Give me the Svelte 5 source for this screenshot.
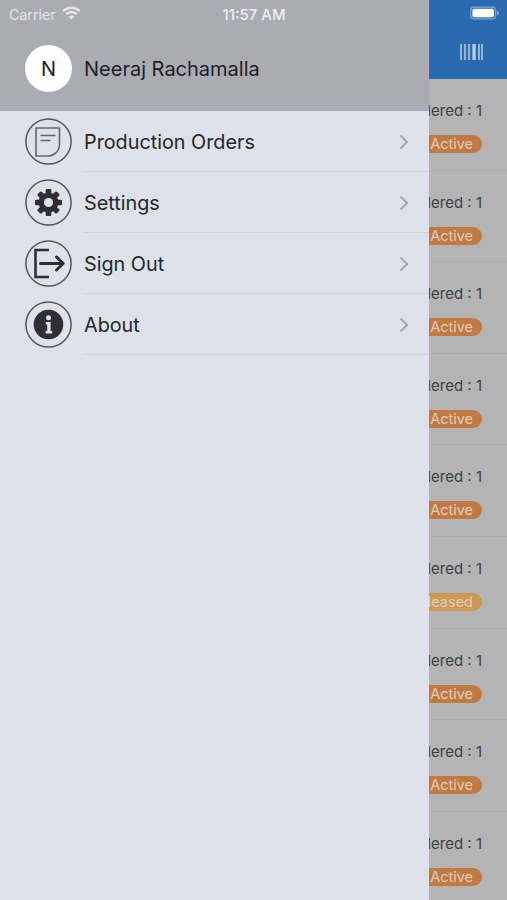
<script>
  const menu = [
    { label: 'Production Orders', icon: 'doc' },
    { label: 'Settings', icon: 'gear' },
    { label: 'Sign Out', icon: 'out' },
    { label: 'About', icon: 'info' }
  ];
  const statuses = ['Active','Active','Active','Active','Active','Released','Active','Active','Active'];
  const teeth = [0,45,90,135];
</script>

<div class="screen">
  <aside class="drawer">
    <header class="profile">
      <div class="status-left">
        <span>Carrier</span>
        <svg width="19" height="14" viewBox="0 0 19 14" aria-hidden="true">
          <path d="M1.2 5.2a11.6 11.6 0 0 1 16.6 0" fill="none" stroke="#e6e6ea" stroke-width="2.4"/>
          <path d="M4.2 8.2a7.4 7.4 0 0 1 10.6 0" fill="none" stroke="#e6e6ea" stroke-width="2.4"/>
          <path d="M6.8 10.7a3.6 3.6 0 0 1 5.4 0L9.5 13.6z" fill="#e6e6ea"/>
        </svg>
        <span class="time">11:57 AM</span>
      </div>
      <div class="user">
        <div class="avatar">N</div>
        <div class="name">Neeraj Rachamalla</div>
      </div>
    </header>
    <nav class="menu">
      {#each menu as item}
        <div class="item">
          <div class="ring">
            <svg width="47" height="47" viewBox="0 0 47 47" aria-hidden="true">
              <circle cx="23.5" cy="23.5" r="22.6" fill="none" stroke="#55555a" stroke-width="1.5"/>
              {#if item.icon === 'doc'}
                <path d="M11 10h23.5v16c0 7-5 12-12 12H11z" fill="none" stroke="#66666a" stroke-width="1.6" stroke-linejoin="round"/>
                <path d="M15.5 17.5h15M15.5 22.5h10" stroke="#66666a" stroke-width="1.6" fill="none"/>
              {:else if item.icon === 'gear'}
                <g fill="#2f2f33">
                  {#each teeth as a}
                    <rect x="20.7" y="10" width="5.6" height="27" rx="1.2" transform="rotate({a} 23.5 23.5)"/>
                  {/each}
                  <circle cx="23.5" cy="23.5" r="10"/>
                </g>
                <circle cx="23.5" cy="23.5" r="4.6" fill="#dde1ea"/>
              {:else if item.icon === 'out'}
                <path d="M24 10H10.5v27H24" fill="none" stroke="#2f2f33" stroke-width="2.6"/>
                <path d="M15.5 23.5H38M31.5 17l6.7 6.5-6.7 6.5" fill="none" stroke="#2f2f33" stroke-width="3" stroke-linecap="round" stroke-linejoin="round"/>
              {:else}
                <circle cx="23.5" cy="23.5" r="14.8" fill="#2f2f33"/>
                <circle cx="23.5" cy="16.8" r="2.5" fill="#dde1ea"/>
                <path d="M20.8 21h4.8v9h1.6v2.4h-6.6V30h1.6v-6.6h-1.4z" fill="#dde1ea"/>
              {/if}
            </svg>
          </div>
          <div class="row">
            <span>{item.label}</span>
            <svg class="chev" width="10" height="16" viewBox="0 0 10 16" aria-hidden="true">
              <path d="M1.5 1.5 8 8l-6.5 6.5" fill="none" stroke="#a4a7ae" stroke-width="2"/>
            </svg>
          </div>
        </div>
      {/each}
    </nav>
  </aside>

  <section class="behind">
    <div class="bar">
      <svg class="battery" width="30" height="14" viewBox="0 0 30 14" aria-hidden="true">
        <rect x="0.7" y="1.2" width="25" height="11.6" rx="3.4" fill="none" stroke="#7da6d6" stroke-width="1.2"/>
        <rect x="2.4" y="2.8" width="21.6" height="8.4" rx="2" fill="#fff"/>
        <path d="M27 5v4c1.2-.3 1.8-1.1 1.8-2s-.6-1.7-1.8-2z" fill="#7da6d6"/>
      </svg>
      <svg class="barcode" width="24" height="16" viewBox="0 0 24 16" aria-hidden="true">
        <path d="M1 0v16M5 0v16M9 0v16M19 0v16M22 0v16" stroke="#c3d2e3" stroke-width="1.4"/>
        <path d="M14 0v16" stroke="#c3d2e3" stroke-width="3.2"/>
      </svg>
    </div>
    {#each statuses as status}
      <div class="order">
        <div class="qty">Ordered : 1</div>
        <div class="badge" class:released={status === 'Released'}>{status}</div>
      </div>
    {/each}
  </section>
</div>

<style>
  :global(body) { margin: 0; }
  .screen {
    display: flex;
    width: 507px;
    height: 900px;
    overflow: hidden;
    font-family: Inter, "Liberation Sans", sans-serif;
    background: #b4b4b4;
  }
  .drawer {
    flex: 0 0 429px;
    background: #dde1ea;
    display: flex;
    flex-direction: column;
    position: relative;
    z-index: 1;
  }
  .profile {
    height: 111px;
    box-sizing: border-box;
    background: #ababb4;
    padding: 5px 0 0 9px;
    flex: none;
  }
  .status-left {
    display: flex;
    align-items: center;
    height: 18px;
    font-size: 14.2px;
    color: #e4e4e8;
  }
  .status-left svg { margin-left: 6px; margin-top: -2px; }
  .time { margin-left: 142px; font-size: 15px; font-weight: 500; color: #eeeef1; }
  .user {
    display: flex;
    align-items: center;
    margin: 22px 0 0 16px;
  }
  .avatar {
    width: 47px;
    height: 47px;
    border-radius: 50%;
    background: #fff;
    color: #222;
    font-size: 20px;
    display: flex;
    align-items: center;
    justify-content: center;
  }
  .name {
    margin-left: 12px;
    font-size: 20px;
    color: #1f1f24;
  }
  .menu { padding-left: 25px; }
  .item {
    display: flex;
    align-items: center;
    height: 61px;
    gap: 12px;
  }
  .ring { width: 47px; height: 47px; flex: none; }
  .ring svg { display: block; }
  .row {
    flex: 1;
    align-self: stretch;
    display: flex;
    align-items: center;
    justify-content: space-between;
    padding: 2px 20px 0 0;
    box-sizing: border-box;
    border-bottom: 1.5px solid #cfd3da;
    font-size: 19.8px;
    color: #26262b;
  }
  .behind {
    flex: 0 0 78px;
    min-width: 0;
    display: flex;
    flex-direction: column;
  }
  .bar {
    height: 79px;
    background: #2a6ab0;
    position: relative;
    flex: none;
  }
  .battery { position: absolute; left: 41px; top: 6px; }
  .barcode { position: absolute; left: 31px; top: 44px; }
  .order {
    height: 91.6px;
    box-sizing: border-box;
    flex: none;
    margin-left: 3px;
    border-bottom: 1px solid #a9a9a9;
    display: flex;
    flex-direction: column;
    align-items: flex-end;
    padding: 23px 25px 0 0;
  }
  .qty {
    font-size: 15px;
    line-height: 18px;
    color: #3f3f42;
    white-space: nowrap;
  }
  .badge {
    margin-top: 15px;
    height: 18px;
    line-height: 18px;
    border-radius: 9px;
    padding: 0 9px 0 30px;
    background: #bf7a46;
    color: #e3cdb8;
    font-size: 14.5px;
    white-space: nowrap;
  }
  .badge.released { background: #cb9856; }
</style>
